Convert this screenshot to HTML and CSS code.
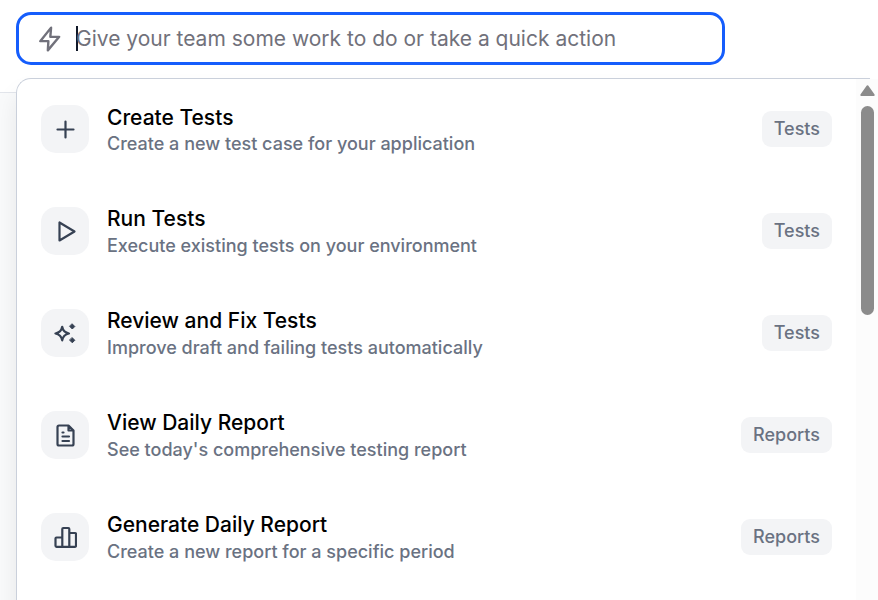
FILE: index.html
```html
<!DOCTYPE html>
<html lang="en">
<head>
<meta charset="utf-8">
<title>Quick actions</title>
<link rel="stylesheet" href="styles.css">
</head>
<body>
<header class="topbar">
  <div class="command">
    <svg class="bolt" viewBox="0 0 24 24"><path d="M13 1.500 3 14h7.500L10 22.500 20.500 10h-8.200z"/></svg>
    <span class="caret"></span>
    <span class="placeholder">Give your team some work to do or take a quick action</span>
  </div>
</header>
<main class="panel">
  <ul class="actions">
    <li class="action">
      <span class="tile"><svg viewBox="0 0 24 24"><path d="M12.500 4.500v16M4.500 12.500h16"/></svg></span>
      <div class="text"><div class="title">Create Tests</div><div class="desc">Create a new test case for your application</div></div>
      <span class="tag">Tests</span>
    </li>
    <li class="action">
      <span class="tile"><svg viewBox="0 0 24 24"><path d="M6.500 3.500v18L21.500 12.500z"/></svg></span>
      <div class="text"><div class="title">Run Tests</div><div class="desc">Execute existing tests on your environment</div></div>
      <span class="tag">Tests</span>
    </li>
    <li class="action">
      <span class="tile"><svg viewBox="0 0 24 24"><path d="M9.200 5.800Q10.200 11.500 16 12.500Q10.200 13.500 9.200 19.300Q8.200 13.500 2.400 12.500Q8.200 11.500 9.200 5.800z"/><path class="solid" d="M19.300 3 21.800 5.500 19.300 8 16.800 5.500zM19.300 16.800 21.800 19.300 19.300 21.800 16.800 19.300z"/></svg></span>
      <div class="text"><div class="title">Review and Fix Tests</div><div class="desc">Improve draft and failing tests automatically</div></div>
      <span class="tag">Tests</span>
    </li>
    <li class="action">
      <span class="tile"><svg viewBox="0 0 24 24"><path d="M15.500 2.500H6Q4.500 2.500 4.500 4v17q0 1.500 1.500 1.500h13q1.500 0 1.500-1.500V7.500zM15.500 2.500v5H20.500M9.500 9.500h1M9.500 13.500h6.500M9.500 18h6.500"/></svg></span>
      <div class="text"><div class="title">View Daily Report</div><div class="desc">See today's comprehensive testing report</div></div>
      <span class="tag">Reports</span>
    </li>
    <li class="action">
      <span class="tile"><svg viewBox="0 0 24 24"><path d="M9.300 12.500H3.500q-1 0-1 1v7.300q0 1 1 1h18.500q1 0 1-1V9q0-1-1-1h-5.500M9.300 21.800V4q0-1 1-1h5q1 0 1 1V21.800"/></svg></span>
      <div class="text"><div class="title">Generate Daily Report</div><div class="desc">Create a new report for a specific period</div></div>
      <span class="tag">Reports</span>
    </li>
  </ul>
  <div class="scrollbar"><svg class="arrow" viewBox="0 0 16 12"><path d="M7.500 2.500 13.500 11H1.500z"/></svg><div class="thumb"></div></div>
</main>
</body>
</html>
```
FILE: styles.css
```css
* { box-sizing: border-box; }
body {
  margin: 0;
  height: 600px;
  overflow: hidden;
  background: #f9fafb;
  font-family: Inter, "Liberation Sans", sans-serif;
}
.topbar {
  height: 93px;
  padding: 12px 0 0 16px;
  background: #fff;
  border-bottom: 1px solid #e2e5eb;
}
.command {
  display: flex;
  align-items: center;
  width: 709px;
  height: 53px;
  padding-left: 17px;
  border: 3px solid #155dfc;
  border-radius: 15px;
  background: #fff;
}
svg {
  fill: none;
  stroke: #364153;
  stroke-width: 2.2;
  stroke-linecap: round;
  stroke-linejoin: round;
}
.bolt { width: 26px; height: 26px; margin-right: -1px; position: relative; left: 1px; stroke: #71717b; }
.caret { width: 2px; height: 25px; margin-left: 15px; background: #101828; }
.placeholder {
  margin-left: -2px;
  font-size: 21px;
  line-height: 30px;
  color: #71717b;
  white-space: nowrap;
}
.panel {
  position: relative;
  display: flex;
  width: 854px;
  height: 540px;
  margin: -15px 0 0 16px;
  border: 1px solid #cad0db;
  border-right: 0;
  border-radius: 15px 0 0 0;
  background: #fff;
  box-shadow: 0 15px 23px rgba(0, 0, 0, .08);
}
.actions {
  flex: 1;
  margin: 0;
  padding: 0 24px 0 24px;
  list-style: none;
}
.action { display: flex; align-items: center; height: 102px; }
.action:first-child { height: 101px; padding-bottom: 1px; }
.tile {
  display: flex;
  align-items: center;
  justify-content: center;
  width: 48px;
  height: 48px;
  border-radius: 15px;
  background: #f3f4f6;
}
.tile svg { width: 24px; height: 24px; }
.solid { fill: #364153; stroke-width: 1; }
.text { flex: 1; margin-left: 18px; white-space: nowrap; }
.title { margin-bottom: 2px; font-size: 21px; line-height: 27px; font-weight: 500; color: #000; }
.action:first-child .text { padding-top: 2px; }
.action:first-child .title { line-height: 28px; margin-bottom: 0; }
.desc { font-size: 18px; line-height: 24px; font-weight: 500; color: #6a7282; }
.tag {
  height: 36px;
  padding: 0 12px;
  border-radius: 9px;
  background: #f3f4f6;
  color: #6a7282;
  font-size: 18px;
  font-weight: 500;
  line-height: 36px;
}
.scrollbar { width: 22px; margin-right: -8px; padding: 5px 0 0 4px; background: #fcfcfc; }
.arrow { display: block; width: 16px; height: 12px; fill: #8b8b8b; stroke: #8b8b8b; }
.thumb { width: 13px; height: 209px; margin: 10px 0 0 1px; border-radius: 7px; background: #8b8b8b; }
```
